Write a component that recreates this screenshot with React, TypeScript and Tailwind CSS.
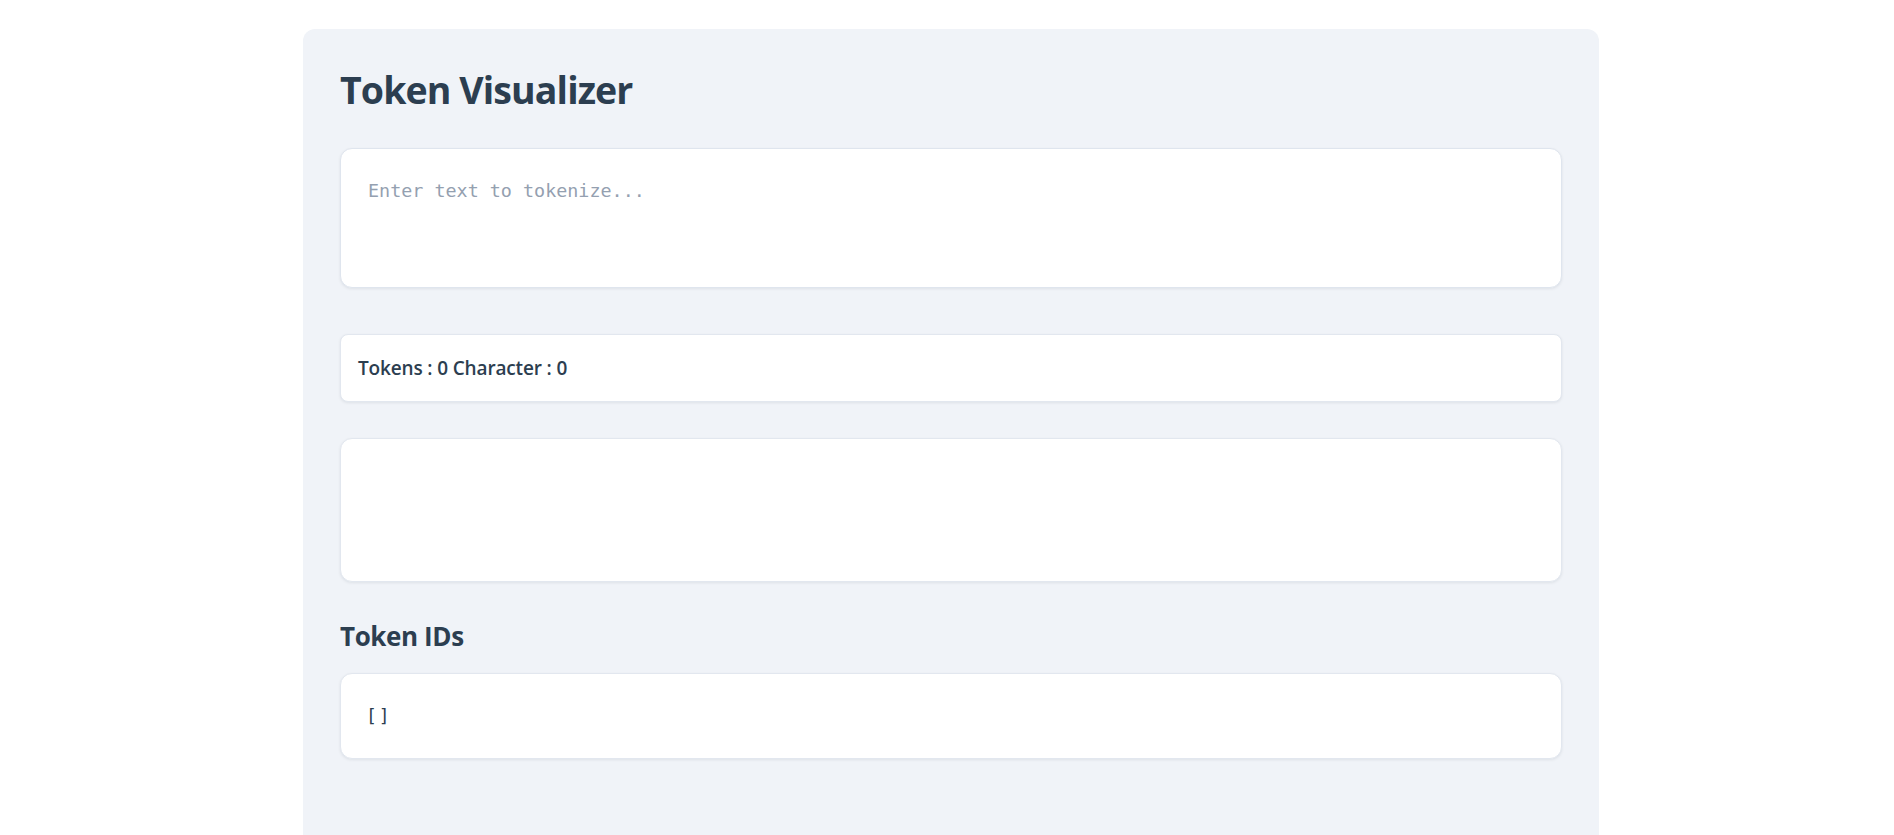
import React from "react";

export default function App() {
  const sans = { fontFamily: '"Open Sans", "Noto Sans", sans-serif' } as React.CSSProperties;
  return (
    <div className="min-h-screen bg-white" style={sans}>
      <div className="ml-[303px] mt-[29px] w-[1296px] rounded-t-xl bg-[#f0f3f8] px-[37px] pb-[76px] pt-[36px] text-[#2c3e50]">
        <h1 className="text-[37.5px] font-bold leading-[50px] tracking-[-0.9px]">Token Visualizer</h1>
        <div className="mt-[33px]">
          <textarea
            placeholder="Enter text to tokenize..."
            className="block h-[140px] w-full resize-none rounded-xl border border-[#dfe5ee] bg-white px-[27px] py-[28px] font-['DejaVu_Sans_Mono',monospace] text-[18.4px] leading-[27px] text-[#2c3e50] shadow-[0_1px_3px_rgba(15,23,42,0.08)] outline-none placeholder:text-[#94a0b0]"
          />
        </div>
        <div className="mt-[46px] flex h-[68px] items-center rounded-lg border border-[#e2e7ef] bg-white px-[17px] shadow-[0_1px_3px_rgba(15,23,42,0.08)]">
          <span className="text-[19px] font-semibold tracking-[-0.15px]">Tokens : 0 Character : 0</span>
        </div>
        <div className="mt-[36px] h-[144px] rounded-xl border border-[#e2e7ef] bg-white shadow-[0_1px_3px_rgba(15,23,42,0.08)]" />
        <h2 className="mt-[36px] text-[26px] font-bold leading-[36px] tracking-[-0.4px]">Token IDs</h2>
        <div className="mt-[19px] flex h-[86px] items-center rounded-xl border border-[#e2e7ef] bg-white px-[25px] shadow-[0_1px_3px_rgba(15,23,42,0.08)]">
          <pre className="font-['DejaVu_Sans_Mono',monospace] text-[18px] leading-[28px] tracking-[2px] text-[#2c3e50]">[]</pre>
        </div>
      </div>
    </div>
  );
}
